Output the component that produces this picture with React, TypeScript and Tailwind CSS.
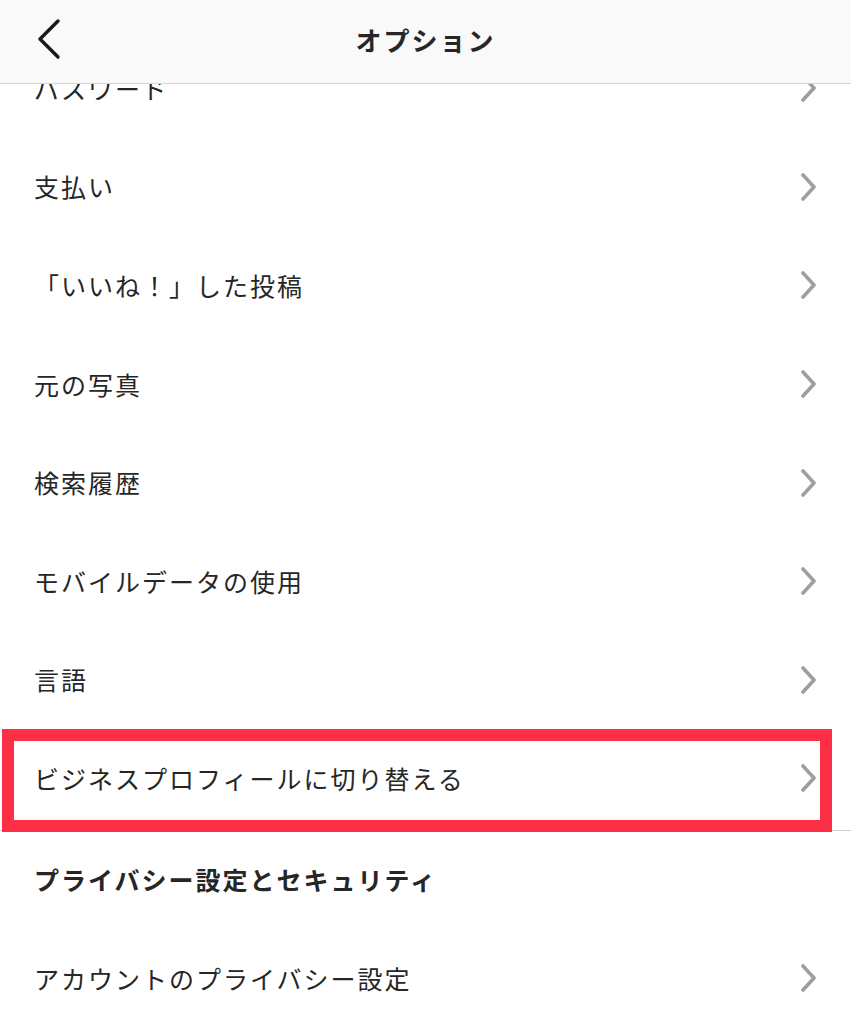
import { ReactNode } from "react"

const font = { fontFamily: '"Noto Sans CJK JP", "Noto Sans", sans-serif' }

// Gray disclosure arrow on the right side of each row
function Chevron() {
  return (
    <svg width="20" height="28" viewBox="0 0 20 28" className="shrink-0">
      <polyline points="4,2 15,14 4,26" fill="none" stroke="#9e9e9e" strokeWidth="3.6" strokeLinecap="round" strokeLinejoin="round" />
    </svg>
  )
}

function Row({ label, children }: { label: string; children?: ReactNode }) {
  return (
    <div className="relative h-[98.6px] flex items-center justify-between pl-[34px] pr-[32px]">
      <span className="text-[25px] tracking-[2px] text-[#262626] leading-none">{label}</span>
      <Chevron />
      {children}
    </div>
  )
}

const rows = [
  "パスワード",
  "支払い",
  "「いいね！」した投稿",
  "元の写真",
  "検索履歴",
  "モバイルデータの使用",
  "言語",
]

export default function App() {
  return (
    <div className="w-[851px] h-[1024px] bg-white flex flex-col overflow-hidden" style={font}>
      {/* Top navigation bar */}
      <div className="relative z-10 h-[84px] shrink-0 bg-[#f9f9f9] border-b border-[#d6d6d6] flex items-center justify-center">
        <svg width="30" height="44" viewBox="0 0 30 44" className="absolute left-[34px] top-[17px]">
          <polyline points="24,4 6,22 24,40" fill="none" stroke="#1a1a1a" strokeWidth="3.4" strokeLinecap="round" strokeLinejoin="round" />
        </svg>
        <span className="text-[26px] font-bold tracking-[2px] text-[#262626] -mt-[4px]">オプション</span>
      </div>

      {/* Scrolled list, first row partly hidden under the bar */}
      <div className="flex-1 overflow-hidden">
        <div className="-mt-[45px]">
          {rows.map((r) => (
            <Row key={r} label={r} />
          ))}
          <Row label="ビジネスプロフィールに切り替える">
            <div className="absolute left-[2px] right-[19px] top-0 -bottom-[4px] border-[12px] border-[#fd2f47]" />
          </Row>
          <div className="mt-[2px] border-t border-[#cfcfcf]">
            <div className="h-[98px] flex items-center pl-[34px]">
              <span className="text-[25px] font-bold tracking-[2px] text-[#262626] leading-none">プライバシー設定とセキュリティ</span>
            </div>
            <Row label="アカウントのプライバシー設定" />
          </div>
        </div>
      </div>
    </div>
  )
}
